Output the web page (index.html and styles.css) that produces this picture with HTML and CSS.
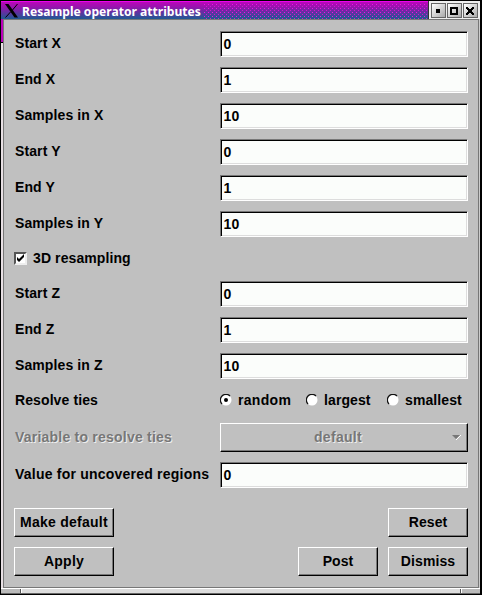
FILE: index.html
```html
<!DOCTYPE html>
<html lang="en"><head><meta charset="utf-8"><title>Resample operator attributes</title><link rel="stylesheet" href="styles.css"></head>
<body>
<div class="window">
<header class="titlebar">
<svg class="logo" width="16" height="16" viewBox="0 0 16 16"><path d="M1 1H4.500L14 14.500H10.500Z" fill="#000"/><path d="M13.500 1L8.500 7M6.500 9L1.500 14.500" stroke="#000" stroke-width="1"/></svg>
<span class="title">Resample operator attributes</span><span class="dots"></span>
<div class="controls">
<span class="control"><svg width="13" height="13" shape-rendering="crispEdges"><path d="M4 5h4v4H4z"/></svg></span>
<span class="control"><svg width="13" height="13" shape-rendering="crispEdges"><path d="M3 4h6v6H3z" fill="none" stroke="#000" stroke-width="2"/></svg></span>
<span class="control"><svg width="13" height="13" shape-rendering="crispEdges"><path d="M2 3h2v1h1v1h2V4h1V3h2v2H9v1H8v2h1v1h1v2H8v-1H7V9H5v1H4v1H2V9h1V8h1V6H3V5H2z"/></svg></span>
</div>
</header>
<main class="panel">
<div class="form">
<div class="row"><span class="label">Start X</span><span class="field">0</span></div>
<div class="row"><span class="label">End X</span><span class="field">1</span></div>
<div class="row"><span class="label">Samples in X</span><span class="field">10</span></div>
<div class="row"><span class="label">Start Y</span><span class="field">0</span></div>
<div class="row"><span class="label">End Y</span><span class="field">1</span></div>
<div class="row"><span class="label">Samples in Y</span><span class="field">10</span></div>
<div class="row check-row"><span class="checkbox"><svg width="9" height="9"><path d="M1 3v3l2 2 5-5V0L3 5z"/></svg></span><span>3D resampling</span></div>
<div class="row"><span class="label">Start Z</span><span class="field">0</span></div>
<div class="row"><span class="label">End Z</span><span class="field">1</span></div>
<div class="row"><span class="label">Samples in Z</span><span class="field">10</span></div>
<div class="row radio-row"><span class="label">Resolve ties</span><div class="radios"><span class="option first"><svg class="radio" width="12" height="12"><circle cx="6" cy="6" r="5.500" fill="#fff"/><path d="M2 10A5.500 5.500 0 0 1 10 2" fill="none" stroke="#111" stroke-width="1.300"/><circle cx="6" cy="6" r="2"/></svg>random</span><span class="option second"><svg class="radio" width="12" height="12"><circle cx="6" cy="6" r="5.500" fill="#fff"/><path d="M2 10A5.500 5.500 0 0 1 10 2" fill="none" stroke="#111" stroke-width="1.300"/></svg>largest</span><span class="option"><svg class="radio" width="12" height="12"><circle cx="6" cy="6" r="5.500" fill="#fff"/><path d="M2 10A5.500 5.500 0 0 1 10 2" fill="none" stroke="#111" stroke-width="1.300"/></svg>smallest</span></div></div>
<div class="row combo-row"><span class="label long disabled">Variable to resolve ties</span><span class="combo disabled"><span>default</span><svg class="arrow" width="9" height="5"><path d="M4 5L9 0" stroke="#fff"/><path d="M0 0h8L4 4z" fill="#777"/></svg></span></div>
<div class="row"><span class="label long">Value for uncovered regions</span><span class="field">0</span></div>
</div>
<div class="actions"><span class="button wide">Make default</span><span class="button push">Reset</span></div>
<div class="actions last"><span class="button wide">Apply</span><span class="button push">Post</span><span class="button">Dismiss</span></div>
</main>
<footer class="resize"><span class="corner"></span><span class="bar"></span><span class="corner right"></span></footer>
</div>
</body></html>
```
FILE: styles.css
```css
*{box-sizing:border-box}
body{margin:0;width:482px;height:595px;overflow:hidden;background:#000;font:bold 14px/18px "Liberation Sans",Arial,sans-serif;letter-spacing:.1px;color:#000}
.window{width:479px;height:593px;margin-left:1px;margin-top:1px;background:linear-gradient(#b0b 0 41px,#000 41px 42px,#e8e0e4 42px) 0 0/2px 100% no-repeat,#ccc}
.titlebar{height:18px;display:flex;background:linear-gradient(#b808b8 0,#a010b0 4px,#7028a4 9px,#146090 18px);border-top:1px solid #e0e}
.logo{margin:1px 0 0 3px;flex:none}
.title{color:#fff;font:bold 12.100px/20px "Noto Sans","Open Sans",sans-serif;letter-spacing:0;white-space:nowrap;width:183px;padding-left:2px}
.dots{flex:1;margin-top:1px;background:conic-gradient(at 1px 1px,transparent 75%,#f010e8 0) 1px 1px/4px 4px,conic-gradient(at 1px 1px,transparent 75%,#d018d0 0) 3px 3px/4px 4px}
.controls{display:flex;gap:1px;height:18px;margin-top:-1px;background:#eee;padding:2px 2px 0;border-left:1px solid #333}
.control{width:15px;height:15px;border:1px solid #666;background:linear-gradient(135deg,#fff,#aaa)}
.control svg{display:block}
.panel{margin:0 1px 0 2px;height:569px;background:#c0c0c0;border:1px solid #777;padding:11px 10px 0}
.form{display:grid;grid-template-rows:repeat(6,26px) 24px repeat(3,26px) 24px 29px 26px;row-gap:10px}
.row{display:flex;align-items:center}
.label{width:206px;padding:0 0 2px 1px;white-space:nowrap}
.check-row,.radio-row{padding-bottom:2px}
.radio-row .label{padding-bottom:0}
.combo-row .label{padding-bottom:1px}
.long{letter-spacing:.22px}
.field{width:248px;height:26px;background:#fbfdfb;border:1px solid;border-color:#777 #fff #fff #777;box-shadow:inset 1px 1px #000,inset -1px -1px #ddd;line-height:24px;padding-left:2.500px}
.disabled{color:#777;text-shadow:1px 1px #eee}
.checkbox{width:13px;height:13px;background:#fff;border:2px solid;border-color:#555 #eee #eee #555;margin-right:6px}
.checkbox svg{display:block}
.radios{display:flex}
.option{display:flex;align-items:center}
.first{width:86px;letter-spacing:.3px}
.second{width:81px}
.radio{margin-right:6px}
.combo{width:248px;height:29px;border:1px solid;border-color:#fff #000 #000 #fff;box-shadow:inset -1px -1px #777;display:flex;align-items:center;justify-content:center;padding:0 12px 2px 0;position:relative;letter-spacing:.3px}
.arrow{position:absolute;right:6px;top:11px}
.actions{display:flex;gap:10px;height:29px;margin-top:20px}
.button{width:80px;height:29px;border:1px solid;border-color:#fff #000 #000 #fff;box-shadow:inset -1px -1px #777;text-align:center;line-height:27px}
.wide{width:100px;letter-spacing:.25px}
.push{margin-left:auto}
.last{margin-top:10px}
.resize{height:6px;display:flex;border-top:1px solid #fff;border-bottom:1px solid #666}
.corner{width:20px;background:#bbb;border-right:1px solid #555}
.right{width:19px;border-right:0;border-left:1px solid #fff}
.bar{flex:1;background:#ddd;border-left:1px solid #fff;border-right:1px solid #555}
```
